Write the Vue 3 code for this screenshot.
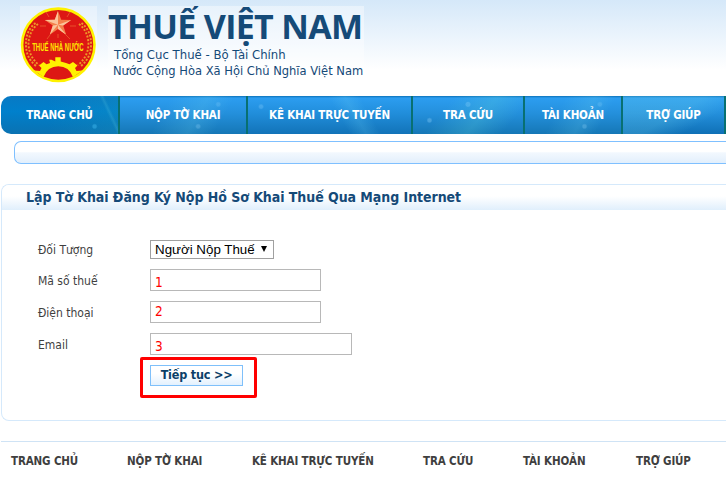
<template>
  <div class="page">
    <header class="header">
      <div class="emblem">
        <svg viewBox="0 0 77 77" width="77" height="77" aria-hidden="true">
          <circle cx="38.3" cy="38.8" r="36.2" fill="#dd1714" stroke="#fff200" stroke-width="2.6" />
          <!-- rays around the star -->
          <path
            d="M26 6l3 5M50 6l-3 5M20 20l6 0M50 20l6 0M27 33l3-4M46 29l4 4M38 28v4"
            stroke="#e8502a"
            stroke-width="1"
          />
          <path
            d="M38 5l3.200 8.700 10 .2-8 5.600 3 9.200-8.200-5.600-8.200 5.600 3-9.200-8-5.600 10-.2z"
            fill="#f4804a"
          />
          <path d="M38 5v13.700l-3.200-5zM51.200 13.900L38 18.700l5.200.8zM46.200 28.700L38 18.700v4.400zM29.800 28.700L38 18.700l-5.200.8zM24.800 13.900L38 18.700l-3.200-5z" fill="#fbc49b" />
          <!-- wheat ears -->
          <g fill="none" stroke="#ee9a28" stroke-width="1.900" stroke-dasharray="2 1.600">
            <path d="M18 18Q9 25 8.500 38Q9 51 19 59" />
            <path d="M15.500 17Q5.500 25 6 39Q6 52 16 60" />
            <path d="M59 18Q68 25 68.500 38Q68 51 58 59" />
            <path d="M61.500 17Q71.500 25 71 39Q71 52 61 60" />
          </g>
          <!-- gear -->
          <path
            d="M14 64.500L20 65 21.500 62 19 59.500 23.500 56 26.500 58.300 30 57 29.200 53.800 31.500 53.800 35.300 55.500V51.300H40.700V55.500L46 57 49.500 58.300 53 56 57.500 59.500 55 62 56.500 65 62.500 64.500 53 71Q49 60.300 38.300 60.300Q27.600 60.300 23.500 71z"
            fill="#fff200"
          />
          <text x="12.200" y="45.500" class="emblem-text" transform="translate(12.2 0) scale(0.6 1) translate(-12.2 0)">THUẾ NHÀ NƯỚC</text>
        </svg>
      </div>
      <div class="brand">
        <div class="brand-title">THUẾ VIỆT NAM</div>
        <div class="brand-line brand-line--dept">Tổng Cục Thuế - Bộ Tài Chính</div>
        <div class="brand-line brand-line--nation">Nước Cộng Hòa Xã Hội Chủ Nghĩa Việt Nam</div>
      </div>
    </header>

    <nav class="nav">
      <a
        v-for="(item, i) in menu"
        :key="item.label"
        class="nav-item"
        :class="{ 'nav-item--active': i === 0 }"
        :style="{ width: item.width + 'px' }"
      >{{ item.label }}</a>
    </nav>

    <div class="subbar"></div>

    <section class="panel">
      <h1 class="panel-title">Lập Tờ Khai Đăng Ký Nộp Hồ Sơ Khai Thuế Qua Mạng Internet</h1>
      <form class="form" @submit.prevent>
        <div class="row row--select">
          <label>Đối Tượng</label>
          <div class="select"><span>Người Nộp Thuế</span><i class="arrow"></i></div>
        </div>
        <div v-for="field in fields" :key="field.label" class="row">
          <label>{{ field.label }}</label>
          <div class="input" :class="{ 'input--wide': field.wide, 'input--raised': field.raised }">{{ field.value }}</div>
        </div>
        <div class="row row--action">
          <button type="submit" class="submit">Tiếp tục &gt;&gt;</button>
          <span class="highlight"></span>
        </div>
      </form>
    </section>

    <footer class="footer">
      <a
        v-for="item in menu"
        :key="item.label"
        :style="{ width: item.footer + 'px' }"
      >{{ item.label }}</a>
    </footer>
  </div>
</template>

<script setup>
const menu = [
  { label: 'TRANG CHỦ', width: 119, footer: 116 },
  { label: 'NỘP TỜ KHAI', width: 128, footer: 125 },
  { label: 'KÊ KHAI TRỰC TUYẾN', width: 165, footer: 171 },
  { label: 'TRA CỨU', width: 112, footer: 100 },
  { label: 'TÀI KHOẢN', width: 98, footer: 113 },
  { label: 'TRỢ GIÚP', width: 103, footer: 90 }
]

const fields = [
  { label: 'Mã số thuế', value: '1' },
  { label: 'Điện thoại', value: '2', raised: true },
  { label: 'Email', value: '3', wide: true }
]
</script>

<style>
body {
  margin: 0;
  background: #fff;
}
</style>

<style scoped>
.page {
  width: 726px;
  height: 479px;
  overflow: hidden;
  background: #fff;
  color: #3f3f3f;
  font-family: Tahoma, "DejaVu Sans Condensed", "DejaVu Sans", sans-serif;
  font-stretch: condensed;
}

/* header */
.header {
  display: flex;
  height: 96px;
  padding: 6px 0 0 20px;
  box-sizing: border-box;
  background: linear-gradient(180deg, #d5e8f9 0%, #ffffff 70px);
}
.emblem {
  width: 77px;
  height: 77px;
  background: rgba(255, 255, 255, 0.35);
}
.emblem svg {
  display: block;
  overflow: visible;
}
.emblem-text {
  fill: #ffe800;
  font-family: "Liberation Sans", Arial, sans-serif;
  font-stretch: normal;
  font-size: 10px;
  font-weight: 700;
}
.brand {
  width: 256px;
  height: 72px;
  margin-left: 11px;
  background: rgba(255, 255, 255, 0.4);
  color: #154a78;
  white-space: nowrap;
}
.brand-title {
  height: 40px;
  line-height: 40px;
  font-family: "Open Sans", "Noto Sans", sans-serif;
  font-stretch: normal;
  font-size: 34px;
  font-weight: 700;
  letter-spacing: -0.7px;
}
.brand-line {
  height: 16px;
  line-height: 17px;
  padding-left: 6px;
  font-size: 13px;
}
.brand-line--nation {
  padding-left: 5px;
  font-size: 12.8px;
}

/* main menu */
.nav {
  display: flex;
  width: 725px;
  height: 38px;
  margin-left: 1px;
  border-radius: 10px 0 0 10px;
  overflow: hidden;
}
.nav-item {
  box-sizing: border-box;
  flex: none;
  border-right: 2px solid #087071;
  background:
    radial-gradient(circle at 78% 22%, rgba(160, 220, 255, 0.2) 0 1.5px, transparent 3px),
    radial-gradient(circle at 62% 80%, rgba(160, 220, 255, 0.25) 0 1.5px, transparent 3px),
    linear-gradient(120deg, transparent 35%, rgba(110, 210, 235, 0.2) 60%, transparent 78%),
    linear-gradient(180deg, #0c72b8 0, #2c9df0 2px, #2490dc 45%, #1577b6 100%);
  color: #fff;
  font-size: 11.5px;
  font-weight: 700;
  letter-spacing: -0.2px;
  line-height: 38px;
  text-align: center;
  white-space: nowrap;
}
.nav-item:nth-child(3) {
  background:
    radial-gradient(circle at 8% 28%, rgba(160, 220, 255, 0.25) 0 1.5px, transparent 3px),
    linear-gradient(60deg, transparent 55%, rgba(110, 210, 245, 0.2) 64%, transparent 72%),
    linear-gradient(180deg, #0c72b8 0, #2c9df0 2px, #218edb 45%, #1273b8 100%);
}
.nav-item:nth-child(4) {
  background:
    radial-gradient(circle at 50% 22%, rgba(160, 220, 255, 0.25) 0 2px, transparent 3px),
    radial-gradient(circle at 15% 64%, rgba(160, 220, 255, 0.3) 0 1.5px, transparent 3px),
    linear-gradient(130deg, transparent 30%, rgba(90, 205, 215, 0.28) 60%, transparent 85%),
    linear-gradient(180deg, #0c72b8 0, #2c9df0 2px, #2490dc 45%, #1577b6 100%);
}
.nav-item:nth-child(6) {
  background:
    linear-gradient(150deg, rgba(110, 210, 235, 0.25) 20%, rgba(110, 210, 235, 0.25) 50%, transparent 75%),
    linear-gradient(180deg, #0c72b8 0, #2c9df0 2px, #2490dc 45%, #0f70b6 100%);
}
.nav-item--active {
  background:
    linear-gradient(65deg, transparent 86%, rgba(80, 190, 220, 0.25) 88%, transparent 90%),
    radial-gradient(circle at 80% 80%, rgba(60, 180, 235, 0.5) 0 1.5px, transparent 3px),
    linear-gradient(90deg, transparent 40%, rgba(30, 150, 185, 0.25)),
    linear-gradient(180deg, #0879c4 0, #0080cc 40%, #0a72b2 100%);
}

.subbar {
  box-sizing: border-box;
  height: 23px;
  margin: 7px 0 0 14px;
  border: 1px solid #7fc0ff;
  border-right: 0;
  border-radius: 7px 0 0 7px;
  background: linear-gradient(180deg, #fff 45%, #f2f8fe 52%, #e2effc 100%);
}

/* form panel */
.panel {
  box-sizing: border-box;
  height: 237px;
  margin: 20px 0 0 1px;
  border: 1px solid #d5e9fb;
  border-right: 0;
  border-radius: 8px 0 0 8px;
  overflow: hidden;
}
.panel-title {
  height: 25px;
  margin: 0;
  padding-left: 24px;
  background: linear-gradient(180deg, #fff 45%, #e0effc 100%);
  color: #154a78;
  font-size: 14px;
  font-weight: 700;
  letter-spacing: -0.05px;
  line-height: 25px;
  white-space: nowrap;
}
.form {
  padding: 30px 0 0 36px;
}
.row {
  display: flex;
  height: 22px;
  margin-bottom: 10px;
}
.row label {
  width: 112px;
  font-size: 12px;
  line-height: 24px;
}
.row--select {
  height: 19px;
}
.row--select label {
  line-height: 20px;
}
.select {
  display: flex;
  align-items: center;
  box-sizing: border-box;
  width: 124px;
  height: 19px;
  padding-left: 4px;
  border: 1px solid #a0a0a0;
  color: #000;
  font-family: "Liberation Sans", Arial, sans-serif;
  font-stretch: normal;
  font-size: 13.33px;
  line-height: 17px;
  white-space: nowrap;
}
.arrow {
  width: 0;
  height: 0;
  margin: -2px 0 0 6px;
  border: 3.5px solid transparent;
  border-top: 6px solid #000;
  border-bottom: 0;
}
.input {
  box-sizing: border-box;
  width: 171px;
  height: 22px;
  padding-left: 4px;
  border: 1px solid #b8b8b8;
  color: #f00;
  font-size: 13.5px;
  line-height: 24px;
}
.input--wide {
  width: 202px;
}
.input--raised {
  line-height: 19px;
}
.row--action {
  position: relative;
  padding-left: 112px;
}
.submit {
  box-sizing: border-box;
  width: 93px;
  height: 21px;
  padding: 0 0 2px;
  border: 1px solid #7fc0fa;
  background: linear-gradient(180deg, #fff 40%, #e3f1fe 100%);
  color: #0b3f68;
  font-family: inherit;
  font-stretch: condensed;
  font-size: 12.5px;
  font-weight: 700;
  letter-spacing: -0.2px;
  line-height: 16px;
}
.highlight {
  position: absolute;
  top: -8px;
  left: 102px;
  box-sizing: border-box;
  width: 117px;
  height: 41px;
  border: 3px solid #f00;
  border-radius: 2px;
}

/* footer menu */
.footer {
  display: flex;
  margin: 20px 0 0 1px;
  padding-left: 10px;
  border-top: 1px solid #cfe3f5;
}
.footer a {
  flex: none;
  font-size: 11.5px;
  font-weight: 700;
  letter-spacing: -0.15px;
  line-height: 38px;
  white-space: nowrap;
}
</style>
